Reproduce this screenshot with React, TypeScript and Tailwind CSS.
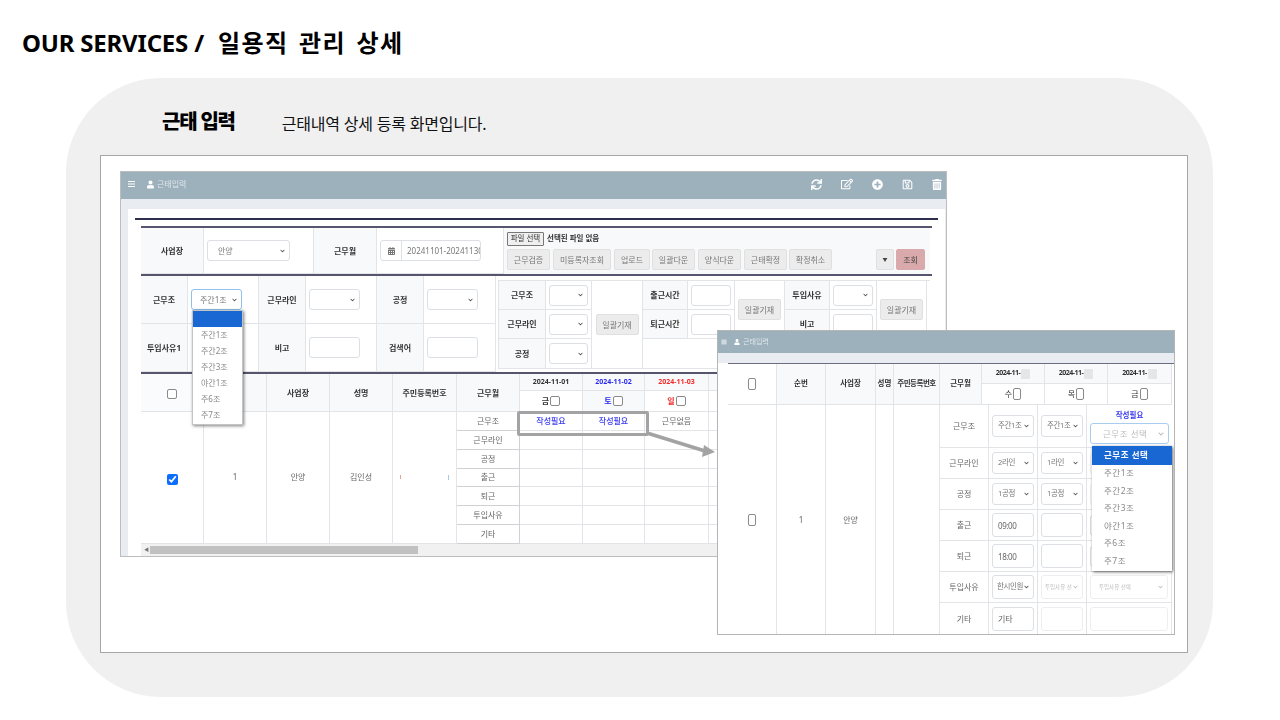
import { FaBars, FaCalendarAlt, FaChevronDown, FaPlusCircle, FaRegEdit, FaRegSave, FaSync, FaTrashAlt, FaUser } from "react-icons/fa"

const labelCell = "flex items-center justify-center bg-[#f8f9fa] border-r border-b border-[#e2e4e7] text-[8px] font-bold text-[#333]"
const plainCell = "flex items-center justify-center border-r border-b border-[#e2e4e7] text-[8px] text-[#666]"
const formCell = "flex items-center justify-center border-r border-b border-[#e2e4e7] px-[3px]"
const btn = "flex items-center justify-center h-[21px] rounded-[2px] bg-[#ececec] border border-[#e0e0e0] text-[8px] text-[#777]"

const shiftItems = ["주간1조", "주간2조", "주간3조", "야간1조", "주6조", "주7조"]

function Select({ value = "", className = "", light = false }: { value?: string; className?: string; light?: boolean }) {
  return (
    <div className={`relative h-[21px] w-full ${className}`}>
      <select
        defaultValue={value}
        className={`h-full w-full appearance-none rounded-[3px] border bg-white pl-[8px] ${light ? "border-[#eceef0] text-[#bbb]" : "border-[#dcdfe3] text-[#777]"}`}
      >
        <option value={value}>{value}</option>
      </select>
      <FaChevronDown className={`pointer-events-none absolute right-[5px] top-1/2 h-[5px] w-[5px] -translate-y-1/2 ${light ? "text-[#bbb]" : "text-[#444]"}`} />
    </div>
  )
}

function TextBox({ value = "", className = "" }: { value?: string; className?: string }) {
  return (
    <input
      readOnly
      defaultValue={value}
      className={`h-[21px] w-full rounded-[3px] border border-[#dcdfe3] bg-white px-[5px] text-[8px] text-[#666] ${className}`}
    />
  )
}

function Check({ narrow = false }: { narrow?: boolean }) {
  return (
    <input
      type="checkbox"
      readOnly
      className={`appearance-none rounded-[2px] border border-[#8a8a8a] bg-white ${narrow ? "h-[12px] w-[8px]" : "h-[10px] w-[10px]"}`}
    />
  )
}

function WindowHeader({ small = false }: { small?: boolean }) {
  return (
    <div className={`flex items-center bg-[#9db1bd] text-white ${small ? "h-[22px] pl-[3px]" : "h-[27px] pb-[3px] pl-[7px] pr-[4px]"}`}>
      <FaBars className={small ? "h-[6px] w-[6px]" : "h-[8px] w-[7px]"} />
      <FaUser className={small ? "ml-[7px] h-[6px] w-[6px]" : "ml-[12px] h-[9px] w-[7px]"} />
      <span className={`ml-[3px] font-normal text-[#dfe6ea] ${small ? "text-[7px]" : "text-[8px]"}`}>근태입력</span>
      {!small && (
        <div className="ml-auto flex items-center gap-[19px]">
          <FaSync className="h-[11px] w-[11px]" />
          <FaRegEdit className="h-[12px] w-[12px]" />
          <FaPlusCircle className="h-[11px] w-[11px]" />
          <FaRegSave className="h-[11px] w-[11px]" />
          <FaTrashAlt className="h-[11px] w-[10px]" />
        </div>
      )}
    </div>
  )
}

function SearchForm() {
  return (
    <>
      <div className="mx-[7px] h-[2px] bg-[#2e2e50]" />
      <div className="mx-[13px] mt-[6px] border-t-2 border-[#55556e]">
        <div className="grid h-[48px] grid-cols-[63px_110px_63px_127px_426px] border-b-2 border-[#55556e]">
          <div className={labelCell}>사업장</div>
          <div className={`${formCell} !justify-start`}>
            <Select value="안양" className="!w-[83px] text-[8px] [&_select]:pl-[10px]" />
          </div>
          <div className={labelCell}>근무월</div>
          <div className={`${formCell} !justify-start`}>
            <div className="flex h-[21px] w-[101px] items-center rounded-[3px] border border-[#dcdfe3]">
              <div className="flex h-full w-[21px] shrink-0 items-center justify-center border-r border-[#dcdfe3]">
                <FaCalendarAlt className="h-[8px] w-[7px] text-[#777]" />
              </div>
              <span className="overflow-hidden whitespace-nowrap pl-[5px] text-[8px] text-[#777]">20241101-20241130</span>
            </div>
          </div>
          <div className="bg-[#f8f9fa] px-[3px] pt-[4px]">
            <div className="flex items-center">
              <span className="flex h-[14px] w-[37px] items-center justify-center rounded-[1px] border border-[#777] bg-[#efefef] text-[7.5px] text-[#333]">파일 선택</span>
              <span className="ml-[3px] text-[7.5px] font-bold text-[#333]">선택된 파일 없음</span>
            </div>
            <div className="mt-[3px] flex pr-[2px]">
              <div className={`${btn} w-[43px]`}>근무검증</div>
              <div className={`${btn} ml-[3px] w-[58px]`}>미등록자조회</div>
              <div className={`${btn} ml-[3px] w-[36px]`}>업로드</div>
              <div className={`${btn} ml-[2px] w-[43px]`}>일괄다운</div>
              <div className={`${btn} ml-[3px] w-[43px]`}>양식다운</div>
              <div className={`${btn} ml-[3px] w-[43px]`}>근태확정</div>
              <div className={`${btn} ml-[2px] w-[43px]`}>확정취소</div>
              <div className={`${btn} ml-auto w-[18px] !text-[5px] !text-[#444]`}>▼</div>
              <div className={`${btn} ml-[2px] w-[29px] !border-[#d9a9ab] !bg-[#d9a9ab] !text-[#444]`}>조회</div>
            </div>
          </div>
        </div>

        <div className="grid grid-cols-[47px_71px_47px_71px_47px_72px_434px] grid-rows-[48px_48px] border-b-2 border-[#55556e]">
          <div className={labelCell}>근무조</div>
          <div className={`${formCell} !justify-start`}><Select value="주간1조" className="!w-[51px] text-[8px] [&_select]:border-[#8fc0ee]" /></div>
          <div className={labelCell}>근무라인</div>
          <div className={`${formCell} !justify-start`}><Select className="!w-[51px]" /></div>
          <div className={labelCell}>공정</div>
          <div className={`${formCell} !justify-start`}><Select className="!w-[51px]" /></div>
          <div className="row-span-2 pl-[2px] pt-[4px]">
            <div className="grid grid-cols-[47px_46px_51px_45px_47px_50px_45px_47px_50px] grid-rows-[29px_29px_30px] border-l border-t border-[#e2e4e7]">
              <div className={labelCell}>근무조</div>
              <div className={formCell}><Select /></div>
              <div className={`${formCell} row-span-3`}><div className={`${btn} w-[43px]`}>일괄기재</div></div>
              <div className={labelCell}>출근시간</div>
              <div className={formCell}><TextBox /></div>
              <div className={`${formCell} row-span-2`}><div className={`${btn} w-[43px]`}>일괄기재</div></div>
              <div className={labelCell}>투입사유</div>
              <div className={formCell}><Select /></div>
              <div className={`${formCell} row-span-2`}><div className={`${btn} w-[43px]`}>일괄기재</div></div>
              <div className={labelCell}>근무라인</div>
              <div className={formCell}><Select /></div>
              <div className={labelCell}>퇴근시간</div>
              <div className={formCell}><TextBox /></div>
              <div className={labelCell}>비고</div>
              <div className={formCell}><TextBox /></div>
              <div className={labelCell}>공정</div>
              <div className={formCell}><Select /></div>
              <div className="col-span-6 border-b border-r border-[#e2e4e7]" />
            </div>
          </div>
          <div className={labelCell}>투입사유1</div>
          <div className={formCell} />
          <div className={labelCell}>비고</div>
          <div className={`${formCell} !justify-start`}><TextBox className="!w-[51px]" /></div>
          <div className={labelCell}>검색어</div>
          <div className={`${formCell} !justify-start`}><TextBox className="!w-[51px]" /></div>
        </div>
      </div>
    </>
  )
}

function AttendanceTable() {
  const rows = ["근무조", "근무라인", "공정", "출근", "퇴근", "투입사유", "기타"]
  const firstRow = [
    { text: "작성필요", color: "!text-[#3a3af0] font-medium" },
    { text: "작성필요", color: "!text-[#3a3af0] font-medium" },
    { text: "근무없음", color: "" },
    { text: "", color: "" },
  ]
  return (
    <div className="mx-[13px] grid grid-cols-[63px_63px_63px_63px_64px_63px_63px_62px_64px_174px] grid-rows-[17px_21px_repeat(7,18.85px)]">
      <div className={`${labelCell} row-span-2 !bg-[#fafbfc] pt-[3px]`}><Check /></div>
      <div className={`${labelCell} row-span-2`}>순번</div>
      <div className={`${labelCell} row-span-2`}>사업장</div>
      <div className={`${labelCell} row-span-2`}>성명</div>
      <div className={`${labelCell} row-span-2`}>주민등록번호</div>
      <div className={`${labelCell} row-span-2`}>근무월</div>
      <div className={`${labelCell} !text-[7px]`}>2024-11-01</div>
      <div className={`${labelCell} !text-[7px] !text-[#2a2af5]`}>2024-11-02</div>
      <div className={`${labelCell} !text-[7px] !text-[#f52a2a]`}>2024-11-03</div>
      <div className={labelCell} />
      <div className={`${plainCell} gap-[1px] font-bold !text-[#333]`}>금<Check /></div>
      <div className={`${labelCell} gap-[1px] !text-[#2a2af5]`}>토<Check /></div>
      <div className={`${plainCell} gap-[1px] font-bold !text-[#f52a2a]`}>일<Check /></div>
      <div className={plainCell} />

      <div className={`${plainCell} row-span-7 pt-[4px]`}>
        <input type="checkbox" defaultChecked className="h-[11px] w-[11px] accent-[#0d6efd]" />
      </div>
      <div className={`${plainCell} row-span-7`}>1</div>
      <div className={`${plainCell} row-span-7`}>안양</div>
      <div className={`${plainCell} row-span-7`}>김인성</div>
      <div className={`${plainCell} row-span-7 !justify-between px-[7px]`}>
        <span className="h-[4px] w-px bg-[#e0a890]" />
        <span className="h-[5px] w-px bg-[#a8c8e8]" />
      </div>
      {rows.map((row, i) => (
        <div key={row} className="contents">
          <div className={`${plainCell} !border-[#cfd2d5]`}>{row}</div>
          {firstRow.map((cell, col) => (
            <div key={col} className={`${plainCell} ${i === 0 ? cell.color : ""}`}>
              {i === 0 ? cell.text : ""}
            </div>
          ))}
        </div>
      ))}
    </div>
  )
}

function DetailWindow() {
  const rows = [
    { label: "근무조", a: "주간1조", b: "주간1조" },
    { label: "근무라인", a: "2라인", b: "1라인" },
    { label: "공정", a: "1공정", b: "1공정" },
  ]
  const condensed = "text-[7.5px] tracking-[-0.4px] [&_select]:pl-[5px]"
  return (
    <div className="absolute left-[616px] top-[174px] h-[305px] w-[458px] overflow-hidden border border-[#b5b5b5] bg-white blur-[0.3px]">
      <WindowHeader small />
      <div className="h-[10px] bg-[#e9edf2]" />
      <div className="ml-[10px] h-[1px] bg-[#6b6b80]" />
      <div className="ml-[10px] grid grid-cols-[49px_49px_50px_18px_46px_232px] grid-rows-[41px_230px]">
        <div className={plainCell}><Check narrow /></div>
        <div className={`${labelCell} !text-[7.5px]`}>순번</div>
        <div className={`${labelCell} !text-[7.5px]`}>사업장</div>
        <div className={`${labelCell} !text-[7.5px]`}>성명</div>
        <div className={`${labelCell} whitespace-nowrap !text-[7.5px] tracking-[-0.5px]`}>주민등록번호</div>
        <div className="grid grid-cols-[42px_63px_63px_64px] grid-rows-[20px_21px]">
          <div className={`${labelCell} row-span-2 !text-[7.5px]`}>근무월</div>
          {[0, 1, 2].map((n) => (
            <div key={n} className={`${labelCell} !text-[7px] tracking-[-0.5px]`}>
              2024-11-<span className="ml-[1px] h-[10px] w-[9px] bg-[#e6e6e6]" />
            </div>
          ))}
          {["수", "목", "금"].map((day) => (
            <div key={day} className={`${plainCell} gap-[1px] !text-[#333]`}>{day}<Check narrow /></div>
          ))}
        </div>

        <div className={plainCell}><Check narrow /></div>
        <div className={plainCell}>1</div>
        <div className={plainCell}>안양</div>
        <div className={plainCell} />
        <div className={plainCell} />
        <div className="grid grid-cols-[49px_49px_49px_85px] grid-rows-[43px_31px_31px_31px_31px_31px_32px]">
          {rows.map((row, i) => (
            <div key={row.label} className="contents">
              <div className={plainCell}>{row.label}</div>
              <div className={formCell}><Select value={row.a} className={`!h-[22px] ${condensed}`} /></div>
              <div className={formCell}><Select value={row.b} className={`!h-[22px] ${condensed}`} /></div>
              {i === 0 ? (
                <div className="flex flex-col items-center border-b border-[#e2e4e7] pt-[4px]">
                  <span className="text-[7.5px] font-bold leading-[12px] text-[#3a3af0]">작성필요</span>
                  <div className="relative mt-[2px] w-[79px] rounded-[3px] border border-[#a9cdf0] pl-[12px] text-[8.5px] leading-[19px] tracking-[0.5px] text-[#bbb]">
                    근무조 선택
                    <FaChevronDown className="absolute right-[4px] top-[7px] h-[6px] w-[6px] text-[#bbb]" />
                  </div>
                </div>
              ) : (
                <div className={formCell}><Select light /></div>
              )}
            </div>
          ))}
          {[
            { label: "출근", a: "09:00" },
            { label: "퇴근", a: "18:00" },
          ].map((row) => (
            <div key={row.label} className="contents">
              <div className={plainCell}>{row.label}</div>
              <div className={formCell}><TextBox value={row.a} className="!h-[24px] tracking-[-0.4px]" /></div>
              <div className={formCell}><TextBox className="!h-[24px]" /></div>
              <div className={formCell}><TextBox /></div>
            </div>
          ))}
          <div className={plainCell}>투입사유</div>
          <div className={formCell}><Select value="한시인원" className={`!h-[24px] ${condensed} [&_select]:!pl-[4px]`} /></div>
          <div className={formCell}><Select light value="투입사유 선" className="!h-[24px] text-[5.5px] [&_select]:pl-[3px]" /></div>
          <div className={formCell}><Select light value="투입사유 선택" className="!h-[24px] text-[5.5px]" /></div>
          <div className={plainCell}>기타</div>
          <div className={formCell}><TextBox value="기타" className="!h-[24px]" /></div>
          <div className={formCell}><TextBox className="!h-[24px] !border-[#eceef0]" /></div>
          <div className={formCell}><TextBox className="!h-[24px] !border-[#eceef0]" /></div>
        </div>
      </div>

      <div className="absolute left-[374px] top-[115px] w-[80px] bg-white pb-[1px] text-[8.5px] tracking-[0.5px] text-[#888] shadow-[1px_1px_3px_rgba(0,0,0,0.6)]">
        <div className="flex h-[19px] items-center bg-[#1967d2] pl-[12px] font-bold text-white">근무조 선택</div>
        {shiftItems.map((item) => (
          <div key={item} className="flex h-[17.5px] items-center pl-[12px]">{item}</div>
        ))}
      </div>
    </div>
  )
}

export default function App() {
  return (
    <div className="h-[720px] w-[1280px] overflow-hidden bg-white font-['Noto_Sans','Noto_Sans_CJK_KR',sans-serif] text-black">
      <div className="flex h-[78px] items-center pl-[22px] pt-[7px]">
        <h1 className="flex items-center text-[24px] font-bold tracking-[-0.2px]">
          OUR SERVICES /
          <span className="ml-[14px] tracking-[1.4px] [word-spacing:3px]">일용직 관리 상세</span>
        </h1>
      </div>

      <div className="ml-[66px] h-[619px] w-[1147px] rounded-[95px] bg-[#f0f0f0]">
        <div className="flex h-[77px] items-center pl-[96px] pt-[10px]">
          <span className="text-[20px] font-black tracking-[-1.2px]">근태 입력</span>
          <span className="ml-[47px] pt-[4px] text-[16px] tracking-[-0.22px] text-[#111]">근태내역 상세 등록 화면입니다.</span>
        </div>

        <div className="relative ml-[34px] h-[498px] w-[1088px] border border-[#a6a6a6] bg-white">
          <div className="relative ml-[19px] mt-[15px] h-[386px] w-[827px] overflow-hidden border border-[#bdbdbd] bg-[#e9edf2] blur-[0.3px]">
            <WindowHeader />
            <div className="ml-[7px] mr-px mt-[10px] h-[347px] bg-white pt-[9px]">
              <SearchForm />
              <AttendanceTable />
              <div className="ml-[13px] flex h-[12px] items-center bg-[#f1f1f1] pl-[3px]">
                <span className="w-[6px] text-[5px] leading-none text-[#777]">◀</span>
                <div className="h-[8px] w-[268px] bg-[#c1c1c1]" />
              </div>
            </div>

            <div className="absolute left-[71px] top-[138px] w-[51px] border border-[#c4c4c4] bg-white pb-[1px] text-[8px] text-[#888] shadow-[1px_1px_3px_rgba(0,0,0,0.5)]">
              <div className="h-[16px] bg-[#1967d2]" />
              {shiftItems.map((item) => (
                <div key={item} className="flex h-[16px] items-center pl-[8px]">{item}</div>
              ))}
            </div>
          </div>

          <div className="absolute left-[416px] top-[255px] h-[25px] w-[132px] rounded-[2px] border-[3px] border-[#a3a3a3]" />
          <svg className="absolute left-[539px] top-[272px]" width="80" height="32" viewBox="0 0 80 32">
            <line x1="7" y1="5" x2="65" y2="23" stroke="#a3a3a3" strokeWidth="3.5" />
            <polygon points="75,24 64,17 62,29" fill="#a3a3a3" />
          </svg>

          <DetailWindow />
        </div>
      </div>
    </div>
  )
}
